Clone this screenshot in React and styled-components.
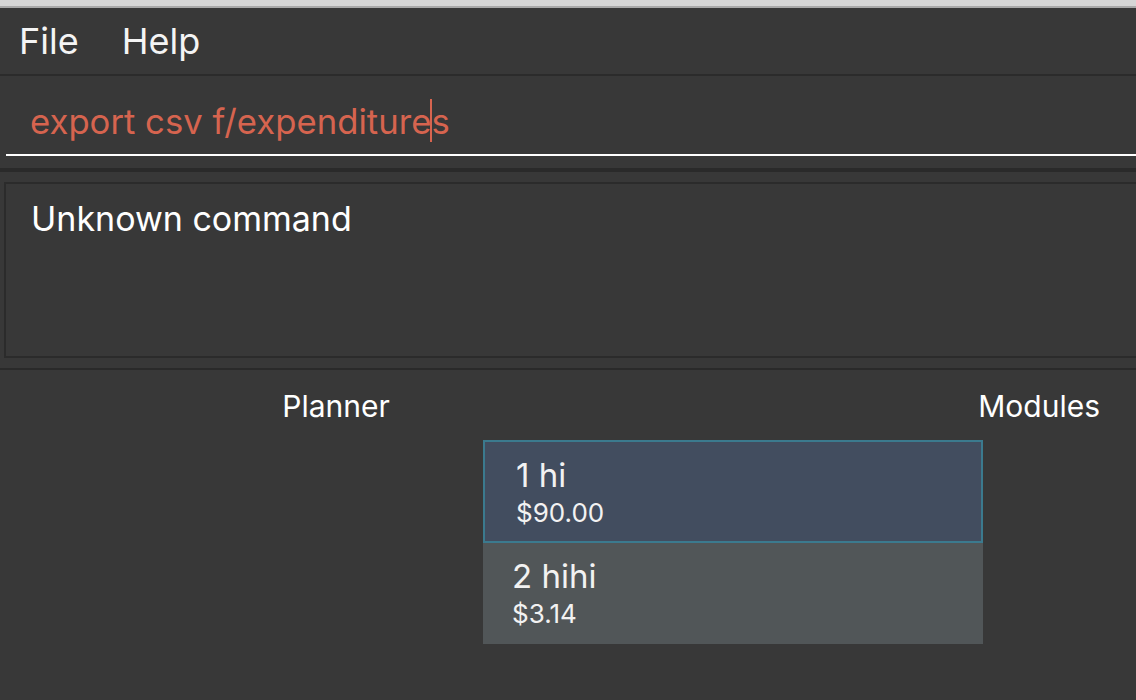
import React from "react";
import styled, { createGlobalStyle } from "styled-components";

const expenses = [
  { id: 1, name: "hi", amount: "$90.00", selected: true },
  { id: 2, name: "hihi", amount: "$3.14", selected: false },
];

const App = () => {
  return (
    <>
      <GlobalStyle />
      <Window>
        <TitleStrip />
        <MenuBar>
          <MenuItem>File</MenuItem>
          <MenuItem>Help</MenuItem>
        </MenuBar>
        <CommandArea>
          <CommandField>
            <CommandText>
              export csv f/expenditure
              <Caret />s
            </CommandText>
          </CommandField>
        </CommandArea>
        <ResultPane>
          <ResultBox>Unknown command</ResultBox>
        </ResultPane>
        <MainPane>
          <HeaderRow>
            <PanelTitle align="center" width="672px">
              Planner
            </PanelTitle>
            <PanelTitle align="right">Modules</PanelTitle>
          </HeaderRow>
          <ExpenseList>
            {expenses.map(item => (
              <ExpenseCard key={item.id} selected={item.selected}>
                <CardTitle>
                  {item.id} {item.name}
                </CardTitle>
                <CardAmount>{item.amount}</CardAmount>
              </ExpenseCard>
            ))}
          </ExpenseList>
        </MainPane>
      </Window>
    </>
  );
};

const GlobalStyle = createGlobalStyle`
  html, body {
    margin: 0;
    padding: 0;
    background: #383838;
  }
  body {
    font-family: Inter, "Noto Sans", sans-serif;
    color: #ffffff;
    overflow: hidden;
  }
`;

const Window = styled.div`
  width: 1136px;
  height: 700px;
  display: flex;
  flex-direction: column;
  background: #383838;
  overflow: hidden;
`;

const TitleStrip = styled.div`
  height: 6px;
  background: #d6d6d6;
  border-bottom: 2px solid #a9a9a9;
`;

const MenuBar = styled.div`
  height: 66px;
  display: flex;
  align-items: center;
  gap: 43px;
  padding-left: 19px;
  border-bottom: 2px solid #2b2b2b;
`;

const MenuItem = styled.span`
  font-size: 36px;
  color: #f4f4f4;
`;

const CommandArea = styled.div`
  height: 92px;
  padding-left: 6px;
  border-bottom: 4px solid #2a2a2a;
`;

const CommandField = styled.div`
  height: 80px;
  box-sizing: border-box;
  border-bottom: 2px solid #ffffff;
  display: flex;
  align-items: flex-end;
  padding: 0 0 12px 24px;
`;

const CommandText = styled.div`
  font-size: 34.7px;
  line-height: 40px;
  color: #d6644f;
  white-space: pre;
  display: flex;
  align-items: center;
`;

const Caret = styled.span`
  display: inline-block;
  width: 2px;
  height: 43px;
  background: #d6644f;
  margin: 0 -1px;
`;

const ResultPane = styled.div`
  padding: 10px 0 10px 4px;
  border-bottom: 2px solid #2a2a2a;
`;

const ResultBox = styled.div`
  height: 158px;
  border: 2px solid #2b2b2b;
  border-right: none;
  padding: 14px 0 0 25px;
  box-sizing: content-box;
  font-size: 34px;
  line-height: 42px;
  color: #ffffff;
`;

const MainPane = styled.div`
  flex: 1;
  display: flex;
  flex-direction: column;
`;

const HeaderRow = styled.div`
  display: flex;
  padding-top: 18px;
  height: 52px;
`;

const PanelTitle = styled.div`
  width: ${props => props.width || "auto"};
  flex: ${props => (props.width ? "none" : "1")};
  text-align: ${props => props.align};
  padding-right: ${props => (props.align === "right" ? "36px" : "0")};
  font-size: 30px;
  line-height: 36px;
  color: #ffffff;
`;

const ExpenseList = styled.div`
  margin-left: 483px;
  width: 500px;
  display: flex;
  flex-direction: column;
`;

const ExpenseCard = styled.div`
  box-sizing: border-box;
  height: ${props => (props.selected ? "103px" : "101px")};
  padding: ${props => (props.selected ? "13px 31px" : "13px 29px")};
  background: ${props => (props.selected ? "#424d5f" : "#515658")};
  border: ${props => (props.selected ? "2px solid #3b7a8e" : "none")};
  display: flex;
  flex-direction: column;
  gap: 2px;
`;

const CardTitle = styled.div`
  font-size: 33px;
  line-height: 40px;
  color: #f2f2f2;
`;

const CardAmount = styled.div`
  font-size: 26px;
  line-height: 31px;
  color: #f2f2f2;
`;

export default App;
